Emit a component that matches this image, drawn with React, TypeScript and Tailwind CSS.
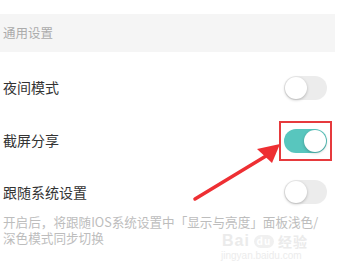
import React from "react";

type ToggleProps = { on?: boolean };

const Toggle = ({ on }: ToggleProps) => {
  return (
    <div
      className={`relative w-[43px] h-[24px] rounded-full ${
        on ? "bg-[#58c6be]" : "bg-[#ececec]"
      }`}
    >
      <div
        className={`absolute top-[1px] w-[22px] h-[22px] rounded-full bg-white shadow-[0_1px_3px_rgba(0,0,0,0.25)] ${
          on ? "right-[1px]" : "left-[1px]"
        }`}
      />
    </div>
  );
};

const App = () => {
  return (
    <div
      className="relative w-[337px] h-[265px] bg-white overflow-hidden"
      style={{ fontFamily: '"Noto Sans CJK SC", "Noto Sans", sans-serif' }}
    >
      {/* Section header */}
      <div className="mt-[14px] h-[38px] w-[335px] bg-[#f5f5f5] flex items-center pl-[3px]">
        <span className="text-[12.5px] text-[#ababab]">通用设置</span>
      </div>

      <div className="pt-[9px]">
        <div className="h-[53px] flex items-center justify-between pl-[3px] pr-[10px]">
          <span className="text-[14px] text-[#333]">夜间模式</span>
          <Toggle />
        </div>

        <div className="h-[53px] flex items-center justify-between pl-[3px] pr-[10px]">
          <span className="text-[14px] text-[#333]">截屏分享</span>
          <div className="relative">
            <Toggle on />
            {/* highlight box */}
            <div className="absolute -left-[5px] -right-[5px] -top-[8px] -bottom-[8px] border-2 border-[#e63a3d]" />
          </div>
        </div>

        <div className="pt-[13px] pl-[3px] pr-[10px]">
          <div className="h-[24px] flex items-center justify-between">
            <span className="text-[14px] text-[#333]">跟随系统设置</span>
            <Toggle />
          </div>
          <div className="mt-[10px] text-[12.6px] leading-[16px] text-[#bdbdbd] whitespace-nowrap">
            <div className="w-fit">开启后，将跟随IOS系统设置中「显示与亮度」面板浅色/</div>
            <div className="w-fit">深色模式同步切换</div>
          </div>
        </div>
      </div>

      {/* watermark */}
      <div className="absolute left-[222px] top-[233px] flex items-center gap-[4px] text-[#ebebeb] text-[16px] font-bold leading-none tracking-[1px]">
        <span style={{ fontFamily: '"Liberation Sans", sans-serif' }}>Bai</span>
        <span className="w-[20px] h-[13px] rounded-full bg-[#f0f0f0] text-[10px] text-white flex items-center justify-center">du</span>
        <span className="text-[14px]">经验</span>
      </div>
      <div
        className="absolute left-[221px] top-[251px] text-[10px] leading-none text-[#ececec]"
        style={{ fontFamily: '"Liberation Sans", sans-serif' }}
      >
        jingyan.baidu.com
      </div>

      {/* arrow */}
      <svg className="absolute left-0 top-0 pointer-events-none" width="337" height="265">
        <path d="M195 199 L266 156" stroke="#ee2f33" strokeWidth="3.5" strokeLinecap="round" />
        <path d="M280 144 L257 149 L272 163 Z" fill="#ee2f33" />
      </svg>
    </div>
  );
};

export default App;
